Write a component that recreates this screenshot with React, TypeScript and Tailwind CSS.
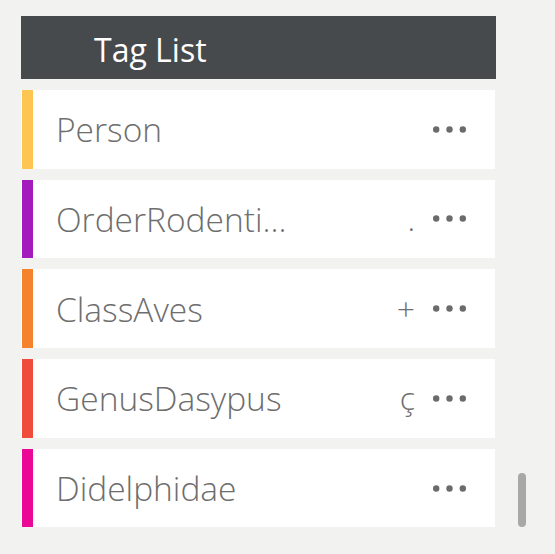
import React from "react";

const rows = [
  { name: "Person", color: "#fdc652", extra: "" },
  { name: "OrderRodenti…", color: "#a41bbd", extra: "." },
  { name: "ClassAves", color: "#f5832e", extra: "+" },
  { name: "GenusDasypus", color: "#f04c3d", extra: "ç" },
  { name: "Didelphidae", color: "#ec0897", extra: "" },
];

function Dots() {
  return (
    <svg width="33" height="7" viewBox="0 0 33 7" className="shrink-0">
      <circle cx="3.2" cy="3.5" r="3.2" fill="#6b6b6b" />
      <circle cx="16.5" cy="3.5" r="3.2" fill="#6b6b6b" />
      <circle cx="29.8" cy="3.5" r="3.2" fill="#6b6b6b" />
    </svg>
  );
}

export default function App() {
  return (
    <div
      className="relative h-[554px] w-[555px] bg-[#f2f2f1] pt-[16px] pl-[21px]"
      style={{ fontFamily: '"Open Sans", "Noto Sans", sans-serif' }}
    >
      <div className="flex h-[63px] w-[475px] items-center bg-[#474a4d] pl-[73px] pt-[4px]">
        <span className="text-[32px] font-normal leading-none text-white">Tag List</span>
      </div>
      <div className="mt-[11px] flex flex-col gap-[11.2px]">
        {rows.map((r) => (
          <div key={r.name} className="flex h-[78.5px] w-[474px] items-center bg-white">
            <div className="ml-[1px] h-full w-[11px]" style={{ backgroundColor: r.color }} />
            <span className="ml-[23px] w-[240px] whitespace-nowrap text-[33.5px] font-light leading-[46px] text-[#6e6e6e]">
              {r.name}
            </span>
            <div className="flex-1" />
            <span className="w-[24px] text-right text-[32px] font-light leading-[40px] text-[#6e6e6e]">
              {r.extra}
            </span>
            <div className="ml-[18px] mr-[29px]">
              <Dots />
            </div>
          </div>
        ))}
      </div>
      <div className="absolute left-[518px] top-[473px] h-[54px] w-[8px] rounded-full bg-[#a8a8a8]" />
    </div>
  );
}
